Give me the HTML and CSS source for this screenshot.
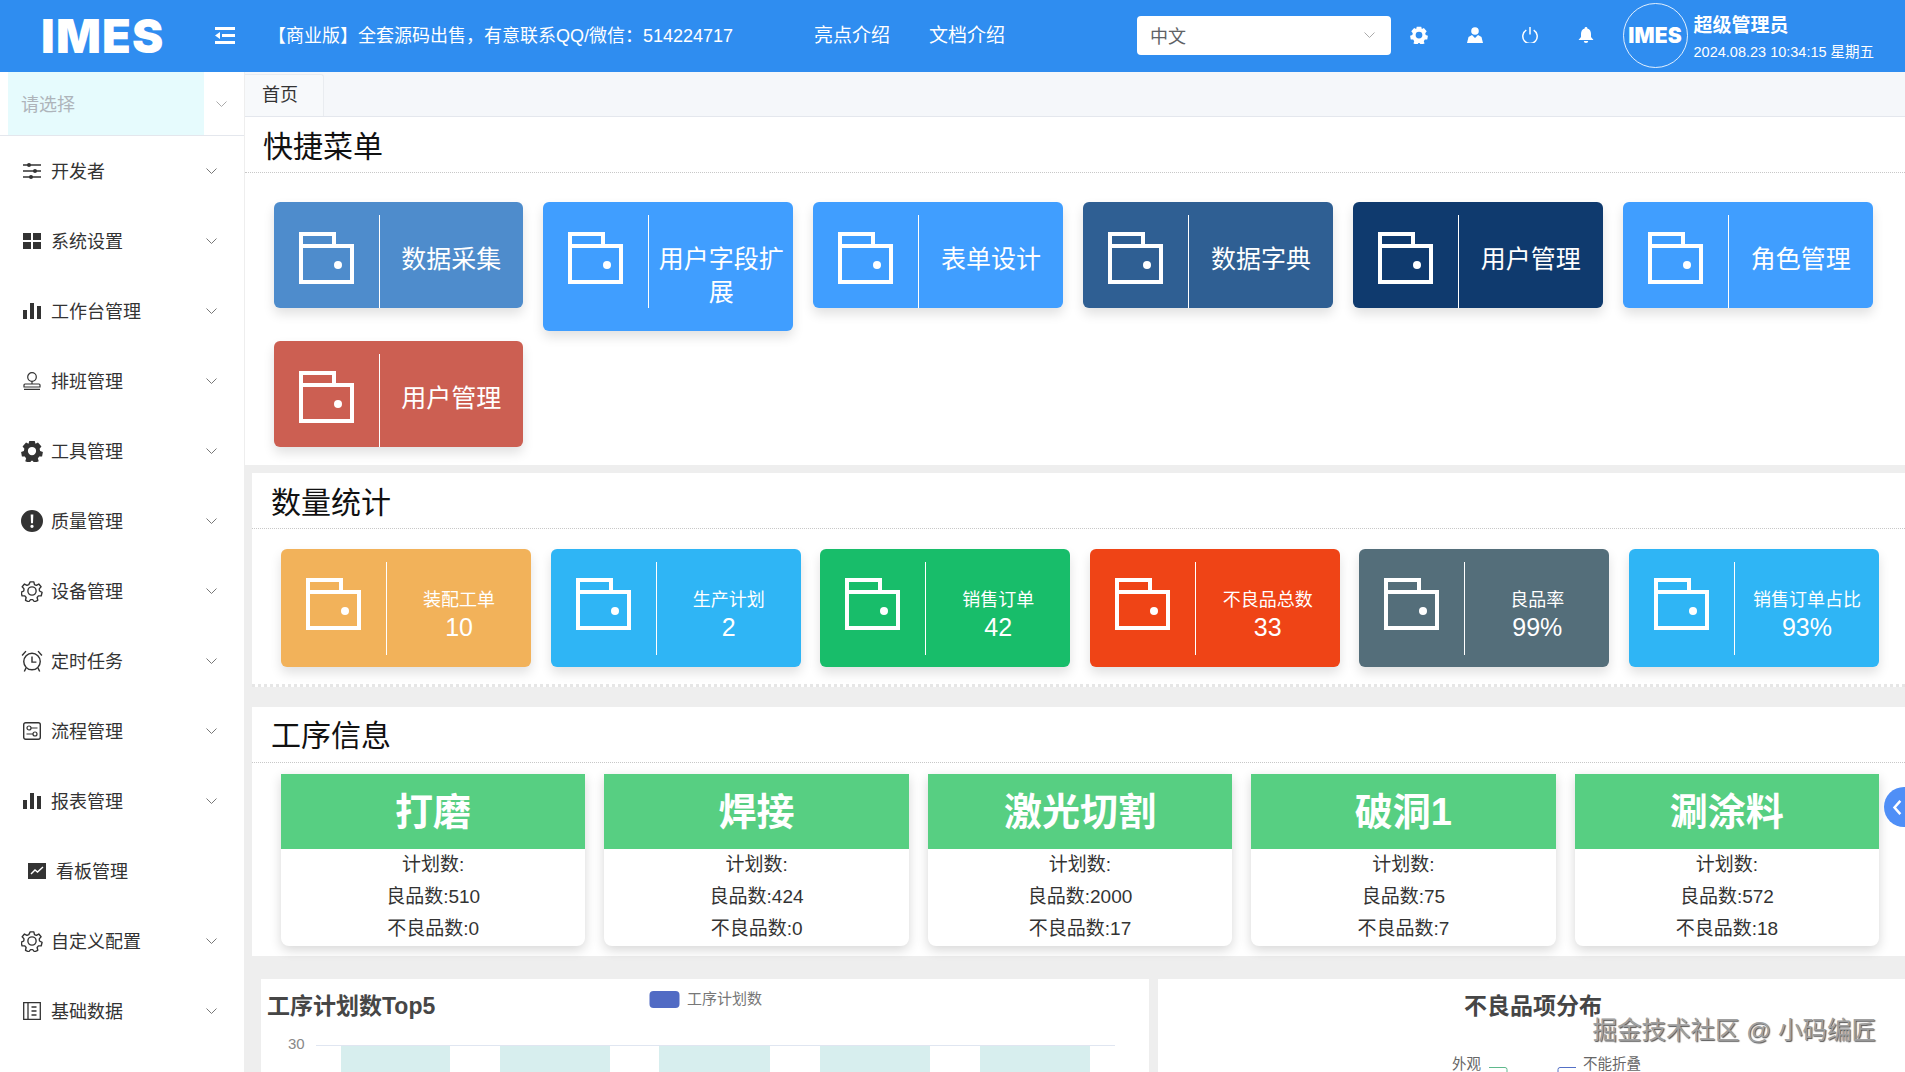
FILE: index.html
```html
<!DOCTYPE html>
<html lang="zh-CN">
<head>
<meta charset="utf-8">
<title>IMES</title>
<link rel="stylesheet" href="styles.css">
</head>
<body>
<svg class="sprite" aria-hidden="true">
  <symbol id="folder" viewBox="0 0 55 52">
    <path d="M2 2H35V14H53V50H2Z M2 14H35" fill="none" stroke="#fff" stroke-width="4"/>
    <circle cx="39" cy="33" r="4" fill="#fff"/>
  </symbol>
  <symbol id="chev" viewBox="0 0 11 6">
    <path d="M.5.5 5.5 5.5 10.5.5" fill="none" stroke="currentColor"/>
  </symbol>
  <symbol id="gear-o" viewBox="0 0 24 24">
    <path d="M10 2h4l.7 3 2 .9 2.7-1.5 2.5 3-2 2.3.3 2.3 2.8 1.4-.9 3.8-3.1.1-1.400 1.800.7 3-3.500 1.700-2-2.400h-2.400l-2 2.400-3.500-1.700.7-3-1.400-1.800-3.100-.1-.9-3.800 2.800-1.400.3-2.300-2-2.300 2.500-3 2.700 1.500 2-.9z" fill="none" stroke="currentColor" stroke-width="1.500" stroke-linejoin="round"/>
    <circle cx="12" cy="12" r="4.500" fill="none" stroke="currentColor" stroke-width="1.500"/>
  </symbol>
  <symbol id="gear-f" viewBox="0 0 24 24">
    <path fill-rule="evenodd" d="M9 1h6l.8 3 2.700-1.400 3.800 4.400-2 2.500.6 2.500 3 1-.9 4.900-3.200.2-1.400 2.200 1 3-5 1.700-1.700-2.500h-1.400l-1.700 2.500-5-1.700 1-3-1.400-2.200-3.200-.2-.9-4.900 3-1 .6-2.500-2-2.500 3.800-4.400 2.700 1.400zM12 7.500a4.500 4.500 0 1 0 0 9 4.500 4.500 0 0 0 0-9z" fill="currentColor"/>
  </symbol>
  <symbol id="bars" viewBox="0 0 18 18">
    <path d="M0 8h4v9H0zM7 1h4v16H7zM14 4h4v13h-4z" fill="currentColor"/>
  </symbol>
</svg>

<div class="app">
  <header class="topbar">
    <div class="logo">IMES</div>
    <svg class="hamburger" viewBox="0 0 20 17"><path d="M0 0h20v3H0zM0 14h20v3H0zM7 7h13v3H7zM0 8.500 5 5v7z" fill="#fff"/></svg>
    <div class="notice">【商业版】全套源码出售，有意联系QQ/微信：514224717</div>
    <a class="nav nav-first">亮点介绍</a>
    <a class="nav nav-second">文档介绍</a>
    <div class="lang">
      <span>中文</span>
      <svg class="chev lang-chev"><use href="#chev"/></svg>
    </div>
    <div class="tools">
      <svg class="tool tool-gear" viewBox="0 0 24 24"><use href="#gear-f"/></svg>
      <svg class="tool" viewBox="0 0 16 16"><circle cx="8" cy="4" r="3.800" fill="#fff"/><path d="M0 16l1.500-6L5 8l3 3 3-3 3.500 2 1.500 6z" fill="#fff"/></svg>
      <svg class="tool" viewBox="0 0 16 16"><path d="M4.300 3.200a7.200 7.200 0 1 0 7.400 0M8 0v7.500" fill="none" stroke="#fff" stroke-width="1.500"/></svg>
      <svg class="tool" viewBox="0 0 16 16"><path d="M8 0a1.300 1.300 0 0 1 1.300 1.500C12 2.300 13 4.500 13 7v3l2.500 3H.5L3 10V7c0-2.500 1-4.700 3.700-5.500A1.300 1.300 0 0 1 8 0zM5.800 14h4.400a2.200 2 0 0 1-4.400 0z" fill="#fff"/></svg>
    </div>
    <div class="avatar">IMES</div>
    <div class="user">
      <div class="user-name">超级管理员</div>
      <div class="user-date">2024.08.23 10:34:15 星期五</div>
    </div>
  </header>

  <div class="main">
    <aside class="sidebar">
      <div class="side-select">
        <div class="side-input">请选择</div>
        <svg class="chev side-chev"><use href="#chev"/></svg>
      </div>
      <nav class="menu">
        <a class="menu-item">
          <svg class="mi" viewBox="0 0 18 18"><path d="M0 3h18M0 9h18M0 15h18" stroke="currentColor" stroke-width="1.300"/><circle cx="6" cy="3" r="2" fill="currentColor"/><circle cx="12" cy="9" r="2" fill="currentColor"/><circle cx="8" cy="15" r="2" fill="currentColor"/></svg>
          <span>开发者</span><svg class="chev"><use href="#chev"/></svg>
        </a>
        <a class="menu-item">
          <svg class="mi" viewBox="0 0 18 18"><path d="M0 1h8v7H0zM10 1h8v7h-8zM0 10h8v7H0zM10 10h8v7h-8z" fill="currentColor"/></svg>
          <span>系统设置</span><svg class="chev"><use href="#chev"/></svg>
        </a>
        <a class="menu-item">
          <svg class="mi"><use href="#bars"/></svg>
          <span>工作台管理</span><svg class="chev"><use href="#chev"/></svg>
        </a>
        <a class="menu-item">
          <svg class="mi" viewBox="0 0 18 18"><circle cx="9" cy="5" r="4.300" fill="none" stroke="currentColor" stroke-width="1.200"/><path d="M9 9.500V12M2 12h14q1 0 1 1v2H1v-2q0-1 1-1zM1 17.300h16" fill="none" stroke="currentColor" stroke-width="1.200"/></svg>
          <span>排班管理</span><svg class="chev"><use href="#chev"/></svg>
        </a>
        <a class="menu-item">
          <svg class="mi mi-lg"><use href="#gear-f"/></svg>
          <span>工具管理</span><svg class="chev"><use href="#chev"/></svg>
        </a>
        <a class="menu-item">
          <svg class="mi mi-lg" viewBox="0 0 20 20"><path fill-rule="evenodd" d="M10 0a10 10 0 1 1 0 20 10 10 0 0 1 0-20zM8.800 4l.3 8h1.800l.3-8zM10 13.300a1.500 1.500 0 1 0 0 3 1.500 1.500 0 0 0 0-3z" fill="currentColor"/></svg>
          <span>质量管理</span><svg class="chev"><use href="#chev"/></svg>
        </a>
        <a class="menu-item">
          <svg class="mi mi-lg"><use href="#gear-o"/></svg>
          <span>设备管理</span><svg class="chev"><use href="#chev"/></svg>
        </a>
        <a class="menu-item">
          <svg class="mi mi-lg" viewBox="0 0 20 20"><circle cx="10" cy="10.500" r="7.500" fill="none" stroke="currentColor" stroke-width="1.300"/><path d="M10 6v5h4M1 5l3.500-4M19 5l-3.500-4M4.500 16.500 3 19.500M15.500 16.500l1.500 3" fill="none" stroke="currentColor" stroke-width="1.300"/></svg>
          <span>定时任务</span><svg class="chev"><use href="#chev"/></svg>
        </a>
        <a class="menu-item">
          <svg class="mi" viewBox="0 0 18 18"><rect x=".7" y=".7" width="16.600" height="16.600" rx="2" fill="none" stroke="currentColor" stroke-width="1.400"/><circle cx="6" cy="6" r="2" fill="none" stroke="currentColor" stroke-width="1.200"/><circle cx="12" cy="12" r="2" fill="none" stroke="currentColor" stroke-width="1.200"/><path d="M8 6h6.500M3.500 12H10" stroke="currentColor" stroke-width="1.200"/></svg>
          <span>流程管理</span><svg class="chev"><use href="#chev"/></svg>
        </a>
        <a class="menu-item">
          <svg class="mi"><use href="#bars"/></svg>
          <span>报表管理</span><svg class="chev"><use href="#chev"/></svg>
        </a>
        <a class="menu-item menu-leaf">
          <svg class="mi" viewBox="0 0 18 18"><path d="M0 1h18v16H0z" fill="currentColor"/><path d="M3 12l4-4 2.500 2L15 5" fill="none" stroke="#fff" stroke-width="1.400"/></svg>
          <span>看板管理</span>
        </a>
        <a class="menu-item">
          <svg class="mi mi-lg"><use href="#gear-o"/></svg>
          <span>自定义配置</span><svg class="chev"><use href="#chev"/></svg>
        </a>
        <a class="menu-item">
          <svg class="mi" viewBox="0 0 18 18"><path d="M.7.7h16.600v16.600H.7zM5 .7v16.600M8.500 5h5M8.500 9h5M8.500 13h5" fill="none" stroke="currentColor" stroke-width="1.300"/></svg>
          <span>基础数据</span><svg class="chev"><use href="#chev"/></svg>
        </a>
      </nav>
    </aside>

    <main class="content">
      <div class="tabs"><div class="tab">首页</div></div>

      <section class="block block-quick">
        <h2 class="block-title">快捷菜单</h2>
        <div class="quick">
          <a class="tile c-steel"><div class="tile-ico"><svg class="folder"><use href="#folder"/></svg></div><div class="tile-text">数据采集</div></a>
          <a class="tile c-blue"><div class="tile-ico"><svg class="folder"><use href="#folder"/></svg></div><div class="tile-text">用户字段扩展</div></a>
          <a class="tile c-blue"><div class="tile-ico"><svg class="folder"><use href="#folder"/></svg></div><div class="tile-text">表单设计</div></a>
          <a class="tile c-denim"><div class="tile-ico"><svg class="folder"><use href="#folder"/></svg></div><div class="tile-text">数据字典</div></a>
          <a class="tile c-navy"><div class="tile-ico"><svg class="folder"><use href="#folder"/></svg></div><div class="tile-text">用户管理</div></a>
          <a class="tile c-blue"><div class="tile-ico"><svg class="folder"><use href="#folder"/></svg></div><div class="tile-text">角色管理</div></a>
          <a class="tile c-brick"><div class="tile-ico"><svg class="folder"><use href="#folder"/></svg></div><div class="tile-text">用户管理</div></a>
        </div>
      </section>

      <section class="block block-inset block-stats">
        <h2 class="block-title">数量统计</h2>
        <div class="stats">
          <div class="stat c-amber"><div class="tile-ico"><svg class="folder"><use href="#folder"/></svg></div><div class="stat-text"><div class="stat-label">装配工单</div><div class="stat-value">10</div></div></div>
          <div class="stat c-sky"><div class="tile-ico"><svg class="folder"><use href="#folder"/></svg></div><div class="stat-text"><div class="stat-label">生产计划</div><div class="stat-value">2</div></div></div>
          <div class="stat c-green"><div class="tile-ico"><svg class="folder"><use href="#folder"/></svg></div><div class="stat-text"><div class="stat-label">销售订单</div><div class="stat-value">42</div></div></div>
          <div class="stat c-red"><div class="tile-ico"><svg class="folder"><use href="#folder"/></svg></div><div class="stat-text"><div class="stat-label">不良品总数</div><div class="stat-value">33</div></div></div>
          <div class="stat c-slate"><div class="tile-ico"><svg class="folder"><use href="#folder"/></svg></div><div class="stat-text"><div class="stat-label">良品率</div><div class="stat-value">99%</div></div></div>
          <div class="stat c-sky"><div class="tile-ico"><svg class="folder"><use href="#folder"/></svg></div><div class="stat-text"><div class="stat-label">销售订单占比</div><div class="stat-value">93%</div></div></div>
        </div>
      </section>

      <section class="block block-inset block-proc">
        <h2 class="block-title">工序信息</h2>
        <div class="procs">
          <div class="proc"><div class="proc-head">打磨</div><div class="proc-body"><p>计划数:</p><p>良品数:510</p><p>不良品数:0</p></div></div>
          <div class="proc"><div class="proc-head">焊接</div><div class="proc-body"><p>计划数:</p><p>良品数:424</p><p>不良品数:0</p></div></div>
          <div class="proc"><div class="proc-head">激光切割</div><div class="proc-body"><p>计划数:</p><p>良品数:2000</p><p>不良品数:17</p></div></div>
          <div class="proc"><div class="proc-head">破洞1</div><div class="proc-body"><p>计划数:</p><p>良品数:75</p><p>不良品数:7</p></div></div>
          <div class="proc"><div class="proc-head">涮涂料</div><div class="proc-body"><p>计划数:</p><p>良品数:572</p><p>不良品数:18</p></div></div>
        </div>
      </section>

      <div class="charts">
        <section class="panel panel-left">
          <h3 class="panel-title">工序计划数Top5</h3>
          <svg class="chart" viewBox="0 0 888 200">
            <rect class="legend-swatch" x="388.500" y="12" width="30" height="17" rx="4"/>
            <text class="legend-text" x="426" y="25">工序计划数</text>
            <text class="axis-text" x="27" y="70">30</text>
            <path class="axis-line" d="M55 66.500H854"/>
            <rect class="bar" x="80" y="67" width="109" height="133"/>
            <rect class="bar" x="239" y="67" width="110" height="133"/>
            <rect class="bar" x="398" y="67" width="111" height="133"/>
            <rect class="bar" x="559" y="67" width="110" height="133"/>
            <rect class="bar" x="719" y="67" width="110" height="133"/>
          </svg>
        </section>
        <section class="panel panel-right">
          <h3 class="panel-title panel-title-center">不良品项分布</h3>
          <svg class="chart" viewBox="0 0 747 200">
            <text class="pie-text" x="294" y="90">外观</text>
            <path class="pie-line-green" d="M331 88.500H347q2 0 2 2V100"/>
            <text class="pie-text" x="425" y="90">不能折叠</text>
            <path class="pie-line-blue" d="M418 88.500H402q-2 0-2 2V100"/>
          </svg>
        </section>
      </div>
    </main>
  </div>

  <div class="float-btn"><svg viewBox="0 0 12 20"><path d="M10 2 3 10l7 8" fill="none" stroke="#fff" stroke-width="3"/></svg></div>
  <div class="watermark">掘金技术社区 @ 小码编匠</div>
</div>
</body>
</html>
```

FILE: styles.css
```css
* { box-sizing: border-box; }
html, body { margin: 0; height: 100%; }
body {
  font-family: "Liberation Sans", "Noto Sans CJK SC", sans-serif;
  color: #333;
  background: #eee;
}
p, h2, h3 { margin: 0; font-weight: normal; }
.sprite { position: absolute; width: 0; height: 0; }
.app { position: relative; height: 100vh; display: flex; flex-direction: column; overflow: hidden; }

/* top bar */
.topbar { flex: none; height: 72px; background: #2f8df0; color: #fff; display: flex; align-items: center; padding-bottom: 2px; }
.logo { width: 122px; margin-left: 41px; font-family: Inter, sans-serif; font-weight: 900; font-size: 47px; line-height: 47px; letter-spacing: 1.2px; white-space: nowrap; }
.hamburger { width: 20px; height: 17px; margin-left: 52px; }
.notice { margin: 0 0 2px 33px; width: 546px; font-size: 18px; white-space: nowrap; }
.nav { font-size: 19px; white-space: nowrap; margin-bottom: 4px; }
.nav-second { margin-left: 39px; }
.lang { width: 254px; height: 39px; margin-left: 132px; background: #fff; border-radius: 4px; color: #606266; font-size: 18px; display: flex; align-items: center; justify-content: space-between; padding: 0 16px 0 13px; }
.chev { width: 11px; height: 6px; color: #777; flex: none; }
.lang-chev { color: #aaa; }
.tools { display: flex; align-items: center; gap: 39.5px; margin-left: 20px; }
.tool { width: 16px; height: 16px; color: #fff; }
.tool-gear { width: 18px; height: 18px; margin: 0 -1px; }
.avatar { width: 65px; height: 65px; margin-left: 29px; border: 1px solid rgba(255,255,255,.85); border-radius: 50%; display: flex; align-items: center; justify-content: center; font-family: Inter, sans-serif; font-weight: 900; font-size: 21px; letter-spacing: .1px; }
.user { margin-left: 6px; padding-top: 4px; white-space: nowrap; }
.user-name { font-size: 19px; font-weight: 700; line-height: 26px; }
.user-date { font-size: 14.5px; line-height: 20px; margin-top: 3px; }

/* layout */
.main { flex: 1; min-height: 0; display: flex; }
.sidebar { flex: none; width: 244px; background: #fff; }
.side-select { height: 64px; padding-left: 8px; display: flex; align-items: center; border-bottom: 1px solid #e4e7ed; }
.side-input { width: 196px; height: 63px; background: #e6fbfd; color: #aeb4ba; font-size: 18px; line-height: 67px; padding-left: 13px; }
.side-chev { margin-left: 12px; color: #aaa; }
.menu-item { height: 70px; display: flex; align-items: center; padding-left: 21px; padding-right: 27px; font-size: 18px; color: #333; white-space: nowrap; }
.menu-item span { margin: 0 0 2px 8px; flex: 1; }
.menu-item .chev { margin-top: -1px; }
.mi { width: 18px; height: 18px; margin: 0 2px; flex: none; color: #333; }
.mi-lg { width: 22px; height: 22px; margin: 0; }
.menu-leaf { padding-left: 26px; }

.content { flex: 1; min-width: 0; margin-left: 1px; background: #eee; overflow: hidden; }
.tabs { height: 45px; background: #f5f7fa; border-bottom: 1px solid #e4e7ed; padding-top: 2px; margin-left: -1px; }
.tab { width: 80px; height: 42px; background: #f7f9fb; border: 1px solid #e9ecf0; border-bottom: 0; border-left: 0; border-radius: 0 3px 0 0; font-size: 18px; line-height: 40px; padding-left: 18px; color: #333; }

.block { background: #fff; }
.block-title { height: 56px; padding-left: 18px; font-size: 30px; line-height: 59px; color: #111; border-bottom: 1px dotted #c8c8c8; white-space: nowrap; }
.block-inset .block-title { padding-left: 19px; line-height: 59px; }
.block-inset { margin-left: 7px; }
.block-proc .block-title { line-height: 58px; }
.block-quick { height: 348px; margin-bottom: 8px; }
.block-stats { height: 214px; margin-bottom: 20px; border-bottom: 3px dotted #e6e6e6; }
.block-proc { height: 249px; }

/* quick tiles */
.quick { display: flex; flex-wrap: wrap; align-items: flex-start; gap: 10px 20.2px; padding: 29px 0 0 28.5px; }
.tile { width: 249.7px; min-height: 105px; display: flex; align-items: flex-start; border-radius: 6px; color: #fff; box-shadow: 0 6px 12px rgba(0,0,0,.12); }
.tile-ico { flex: none; width: 106px; height: 93px; margin-top: 13px; border-right: 1px solid #fff; padding: 17px 0 0 25px; }
.folder { display: block; width: 55px; height: 52px; }
.tile-text { flex: 1; padding: 41px 9px 22px; font-size: 25px; line-height: 33px; text-align: center; }
.c-steel { background: #4e8ccc; }
.c-blue { background: #409eff; }
.c-denim { background: #2f5f93; }
.c-navy { background: #0f3a6e; }
.c-brick { background: #cc5f52; }
.c-amber { background: #f2b25a; }
.c-sky { background: #2fb5f5; }
.c-green { background: #18bd6a; }
.c-red { background: #ef4416; }
.c-slate { background: #546e7a; }

/* stats */
.stats { display: grid; grid-template-columns: repeat(6, 1fr); gap: 19.4px; padding: 20px 26px 0 29px; }
.stat { height: 118px; display: flex; align-items: flex-start; border-radius: 6px; color: #fff; box-shadow: 0 6px 12px rgba(0,0,0,.12); }
.stat .tile-ico { padding-top: 16px; }
.stat-text { flex: 1; padding-top: 38px; text-align: center; white-space: nowrap; }
.stat-label { font-size: 18px; line-height: 26px; }
.stat-value { font-size: 25px; line-height: 30px; margin-top: -1px; }

/* process */
.procs { display: grid; grid-template-columns: repeat(5, 1fr); gap: 19.2px; padding: 11px 26px 0 29px; }
.proc { height: 172px; background: #fff; border-radius: 0 0 8px 8px; overflow: hidden; box-shadow: 0 4px 12px rgba(0,0,0,.16); }
.proc-head { height: 75px; background: #57cf82; color: #fff; font-size: 38px; font-weight: 700; line-height: 77px; text-align: center; }
.proc-body { font-size: 19px; line-height: 32px; text-align: center; color: #333; }

/* charts */
.charts { display: flex; gap: 9px; margin: 23px 0 0 16px; height: 100px; }
.panel { position: relative; background: #fff; overflow: hidden; height: 200px; }
.panel-left { flex: none; width: 888px; }
.panel-right { flex: 1; }
.panel-title { position: relative; z-index: 1; padding: 12px 0 0 6px; font-size: 23px; font-weight: 700; line-height: 30px; color: #464646; white-space: nowrap; }
.panel-title-center { padding-left: 3px; text-align: center; }
.chart { position: absolute; left: 0; top: 0; width: 100%; height: 200px; }
.legend-swatch { fill: #516bc4; }
.legend-text { fill: #777; font-size: 15px; }
.axis-text { fill: #888; font-size: 15px; }
.axis-line { stroke: #e0e6f1; fill: none; }
.bar { fill: #d7eeee; }
.pie-text { fill: #666; font-size: 14.5px; }
.pie-line-green { stroke: #5fb98c; fill: none; }
.pie-line-blue { stroke: #5470c6; fill: none; }

/* overlays */
.float-btn { position: absolute; left: 1884px; top: 787px; width: 40px; height: 40px; border-radius: 50%; background: #4f8ff7; display: flex; align-items: center; padding-left: 8px; }
.float-btn svg { width: 10px; height: 17px; }
.watermark { position: absolute; right: 29px; top: 1015px; font-size: 24.5px; line-height: 32px; color: #a0a0a0; text-shadow: 1px 1px 1px #555; white-space: nowrap; }
```
